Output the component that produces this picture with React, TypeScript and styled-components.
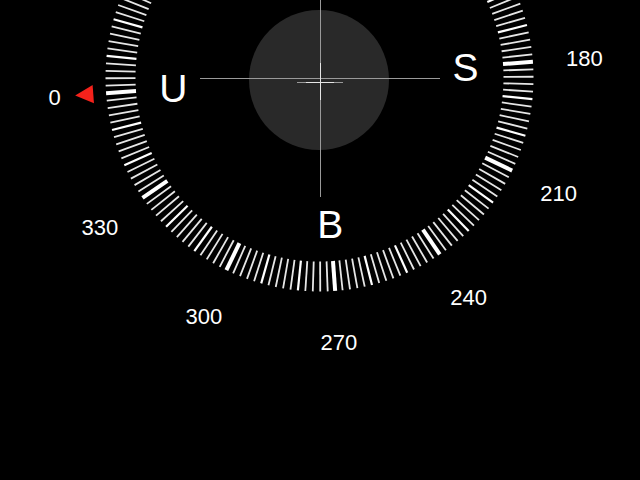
import styled, { createGlobalStyle } from "styled-components";

const CX = 319.5;
const CY = 77.5;
const ROT = 175.8; // where 0 sits on the dial, degrees clockwise from the right

const polar = (r: number, deg: number) => {
  const a = ((ROT + deg) * Math.PI) / 180;
  return { x: CX + r * Math.cos(a), y: CY + r * Math.sin(a) };
};

const GlobalStyle = createGlobalStyle`
  html, body {
    margin: 0;
    padding: 0;
    background: #000;
  }
`;

const Screen = styled.div`
  width: 640px;
  height: 480px;
  background: #000;
  overflow: hidden;
  display: flex;
  align-items: flex-start;
  justify-content: center;
`;

const Dial = styled.svg`
  display: block;
  font-family: "Liberation Sans", Arial, sans-serif;
`;

const Tick = styled.line<{ $kind: "minor" | "ten" | "major" }>`
  stroke: #fff;
  stroke-width: ${({ $kind }) => ($kind === "major" ? 4 : $kind === "ten" ? 2.2 : 1.8)};
  opacity: ${({ $kind }) => ($kind === "minor" ? 0.9 : 1)};
`;

const Degree = styled.text`
  fill: #fff;
  font-size: 22px;
  text-anchor: middle;
`;

const Cardinal = styled.text`
  fill: #fff;
  font-size: 39px;
  text-anchor: middle;
`;

const Bubble = styled.circle`
  fill: #292929;
`;

const Hair = styled.line<{ $bright?: boolean }>`
  stroke: ${({ $bright }) => ($bright ? "#e6e6e6" : "#9a9a9a")};
  stroke-width: 1;
`;

const Pointer = styled.polygon`
  fill: #f5221b;
`;

const ticks = Array.from({ length: 180 }, (_, i) => i * 2);
// only the part of the dial that is on screen gets its labels
const degrees = [0, 180, 210, 240, 270, 300, 330];
const cardinals = [
  { deg: 0, label: "U" },
  { deg: 180, label: "S" },
  { deg: 270, label: "B" },
];

const App = () => {
  const tip = polar(245, 0);
  const b1 = polar(227, -2.3);
  const b2 = polar(227, 2.3);

  return (
    <>
      <GlobalStyle />
      <Screen>
        <Dial width={640} height={480} viewBox="0 0 640 480">
          <Bubble cx={319} cy={80} r={70} />

          {ticks.map((d) => {
            const p1 = polar(184, d);
            const p2 = polar(214, d);
            const kind = d % 30 === 0 ? "major" : d % 10 === 0 ? "ten" : "minor";
            return <Tick key={d} x1={p1.x} y1={p1.y} x2={p2.x} y2={p2.y} $kind={kind} />;
          })}

          {degrees.map((d) => {
            const p = polar(265.5, d);
            return (
              <Degree key={d} x={p.x} y={p.y + 22 * 0.358}>
                {d}
              </Degree>
            );
          })}

          {cardinals.map((c) => {
            const p = polar(146.5, c.deg);
            return (
              <Cardinal key={c.label} x={p.x} y={p.y + 39 * 0.358}>
                {c.label}
              </Cardinal>
            );
          })}

          <Pointer points={`${tip.x},${tip.y} ${b1.x},${b1.y} ${b2.x},${b2.y}`} />

          <Hair x1={200} y1={78.5} x2={440} y2={78.5} />
          <Hair x1={320.5} y1={0} x2={320.5} y2={197} />
          <Hair x1={297} y1={82.5} x2={343} y2={82.5} />
          <Hair x1={306} y1={82.5} x2={334} y2={82.5} $bright />
          <Hair x1={320.5} y1={63} x2={320.5} y2={100} $bright />
        </Dial>
      </Screen>
    </>
  );
};

export default App;
